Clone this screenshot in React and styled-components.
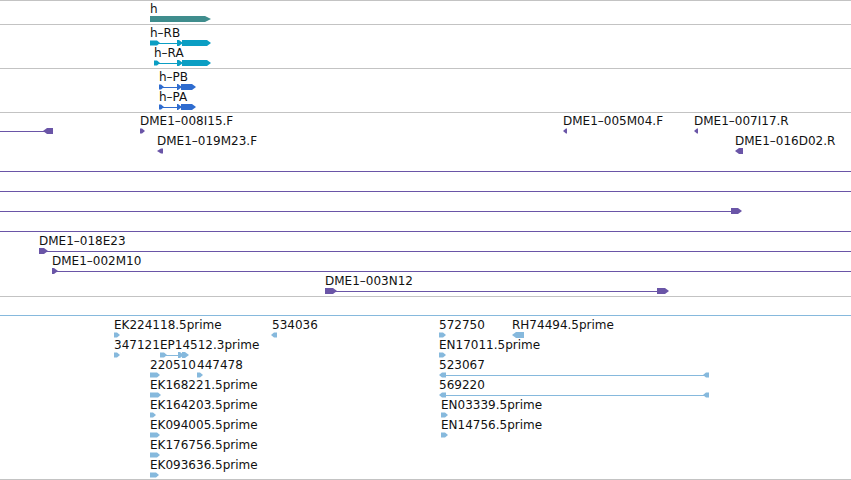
import React from "react";
import styled, { createGlobalStyle } from "styled-components";

const GlobalStyle = createGlobalStyle`
  html, body {
    margin: 0;
    padding: 0;
    background: #fff;
  }
  body {
    font-family: "DejaVu Sans", "Liberation Sans", sans-serif;
  }
`;

const Browser = styled.div`
  width: 851px;
  height: 480px;
  overflow: hidden;
  background: #fff;
  display: flex;
  flex-direction: column;
`;

const Track = styled.section`
  border-top: 1px solid #c3c3c3;
  padding-bottom: ${(p) => p.$pad}px;
  display: flex;
  flex-direction: column;
`;

const Row = styled.div`
  position: relative;
  height: 20px;
`;

const Glyphs = styled.svg`
  position: absolute;
  left: 0;
  top: 0;
  width: 851px;
  height: 20px;
  overflow: visible;
`;

const Label = styled.span`
  position: absolute;
  top: 2px;
  font-size: 12px;
  line-height: 12px;
  color: #111;
  white-space: nowrap;
`;

const MID = 18;

// a feature part with a pointed end ("r" or "l"), or a plain box
function blockPoints(x1, x2, dir, h, tip) {
  const t = MID - h / 2;
  const b = MID + h / 2;
  if (dir === "r") {
    return `${x1},${t} ${x2 - tip},${t} ${x2},${MID} ${x2 - tip},${b} ${x1},${b}`;
  }
  if (dir === "l") {
    return `${x1},${MID} ${x1 + tip},${t} ${x2},${t} ${x2},${b} ${x1 + tip},${b}`;
  }
  return `${x1},${t} ${x2},${t} ${x2},${b} ${x1},${b}`;
}

function Part({ item, color }) {
  if (item.line) {
    const [x1, x2] = item.line;
    return <rect x={x1} y={MID} width={x2 - x1} height={1} fill={color} />;
  }
  const [x1, x2, dir = "r", h = 6, tip = 3] = item.block;
  return <polygon points={blockPoints(x1, x2, dir, h, tip)} fill={color} />;
}

function FeatureRow({ items, color }) {
  return (
    <Row>
      <Glyphs viewBox="0 0 851 20">
        {items
          .filter((it) => !it.label)
          .map((it, i) => (
            <Part key={i} item={it} color={color} />
          ))}
      </Glyphs>
      {items
        .filter((it) => it.label)
        .map((it, i) => (
          <Label key={i} style={{ left: it.x }}>
            {it.label}
          </Label>
        ))}
    </Row>
  );
}

const tracks = [
  {
    color: "#3f8d8d",
    rows: [[{ label: "h", x: 150 }, { block: [150, 211, "r", 6, 6] }]],
  },
  {
    color: "#0b9ec3",
    rows: [
      [
        { label: "h–RB", x: 150 },
        { block: [150, 160, "r", 5, 3] },
        { line: [159, 179] },
        { block: [177, 183, "r", 6, 4] },
        { block: [182, 211, "r", 6, 4] },
      ],
      [
        { label: "h–RA", x: 154 },
        { block: [154, 160, "r", 5, 3] },
        { line: [159, 179] },
        { block: [177, 183, "r", 6, 4] },
        { block: [182, 211, "r", 6, 4] },
      ],
    ],
  },
  {
    color: "#2f6ccf",
    rows: [
      [
        { label: "h–PB", x: 159 },
        { block: [159, 164, "r", 5, 3] },
        { line: [163, 179] },
        { block: [177, 182, "r", 6, 4] },
        { block: [181, 196, "r", 6, 4] },
      ],
      [
        { label: "h–PA", x: 159 },
        { block: [159, 164, "r", 5, 3] },
        { line: [163, 179] },
        { block: [177, 182, "r", 6, 4] },
        { block: [181, 196, "r", 6, 4] },
      ],
    ],
  },
  {
    color: "#6a55a7",
    rows: [
      [
        { line: [0, 45] },
        { block: [43, 53, "l", 6, 4] },
        { label: "DME1–008I15.F", x: 140 },
        { block: [140, 145, "r", 5, 3] },
        { label: "DME1–005M04.F", x: 563 },
        { block: [563, 567, "l", 5, 3] },
        { label: "DME1–007I17.R", x: 694 },
        { block: [694, 698, "l", 5, 3] },
      ],
      [
        { label: "DME1–019M23.F", x: 157 },
        { block: [157, 163, "l", 5, 4] },
        { label: "DME1–016D02.R", x: 735 },
        { block: [735, 743, "l", 6, 4] },
      ],
      [{ line: [0, 851] }],
      [{ line: [0, 851] }],
      [{ line: [0, 733] }, { block: [731, 742, "r", 6, 4] }],
      [{ line: [0, 851] }],
      [
        { label: "DME1–018E23", x: 39 },
        { block: [39, 48, "r", 6, 4] },
        { line: [46, 851] },
      ],
      [
        { label: "DME1–002M10", x: 52 },
        { block: [52, 58, "r", 6, 4] },
        { line: [56, 851] },
      ],
      [
        { label: "DME1–003N12", x: 325 },
        { block: [325, 337, "r", 6, 4] },
        { line: [335, 659] },
        { block: [657, 669, "r", 6, 4] },
      ],
    ],
  },
  {
    color: "#86b9dd",
    pad: 2,
    rows: [
      [{ line: [0, 851] }],
      [
        { label: "EK224118.5prime", x: 114 },
        { block: [114, 120, "r", 5, 3] },
        { label: "534036", x: 272 },
        { block: [271, 277, "l", 5, 3] },
        { label: "572750", x: 439 },
        { block: [439, 446, "r", 5, 3] },
        { label: "RH74494.5prime", x: 512 },
        { block: [512, 524, "l", 6, 4] },
      ],
      [
        { label: "347121", x: 114 },
        { block: [114, 120, "r", 5, 3] },
        { label: "EP14512.3prime", x: 160 },
        { block: [160, 167, "r", 5, 3] },
        { line: [166, 180] },
        { block: [178, 184, "r", 6, 4] },
        { block: [182, 189, "r", 6, 4] },
        { label: "EN17011.5prime", x: 439 },
        { block: [439, 446, "r", 5, 3] },
      ],
      [
        { label: "220510", x: 150 },
        { block: [150, 160, "r", 5, 3] },
        { label: "447478", x: 197 },
        { block: [197, 203, "r", 5, 3] },
        { label: "523067", x: 439 },
        { block: [439, 446, "l", 5, 3] },
        { line: [444, 705] },
        { block: [703, 709, "l", 5, 3] },
      ],
      [
        { label: "EK168221.5prime", x: 150 },
        { block: [150, 161, "r", 5, 3] },
        { label: "569220", x: 439 },
        { block: [439, 446, "l", 5, 3] },
        { line: [444, 705] },
        { block: [703, 709, "l", 5, 3] },
      ],
      [
        { label: "EK164203.5prime", x: 150 },
        { block: [150, 156, "r", 5, 3] },
        { label: "EN03339.5prime", x: 441 },
        { block: [441, 448, "r", 5, 3] },
      ],
      [
        { label: "EK094005.5prime", x: 150 },
        { block: [150, 160, "r", 5, 3] },
        { label: "EN14756.5prime", x: 441 },
        { block: [441, 448, "r", 5, 3] },
      ],
      [
        { label: "EK176756.5prime", x: 150 },
        { block: [150, 160, "r", 5, 3] },
      ],
      [
        { label: "EK093636.5prime", x: 150 },
        { block: [150, 159, "r", 5, 3] },
      ],
    ],
  },
];

export default function App() {
  return (
    <>
      <GlobalStyle />
      <Browser>
        {tracks.map((track, ti) => (
          <Track key={ti} $pad={track.pad ?? 3}>
            {track.rows.map((items, ri) => (
              <FeatureRow key={ri} items={items} color={track.color} />
            ))}
          </Track>
        ))}
        <Track $pad={0} />
      </Browser>
    </>
  );
}
